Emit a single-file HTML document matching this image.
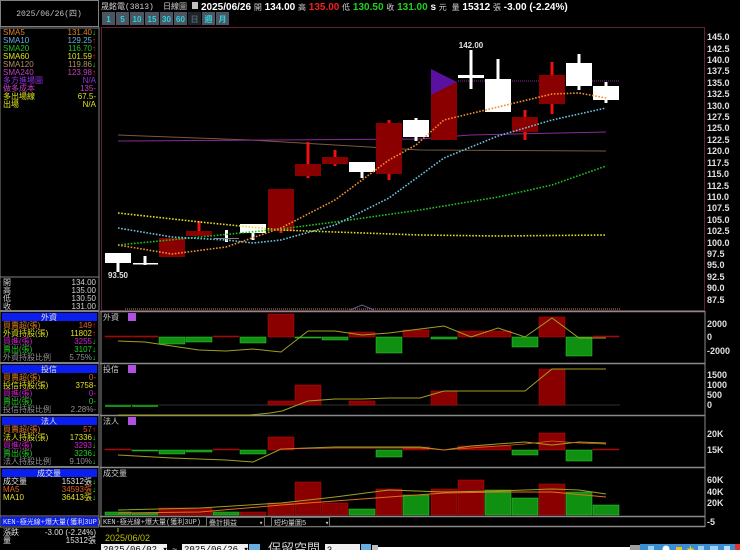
<!DOCTYPE html>
<html><head><meta charset="utf-8"><style>
html,body{margin:0;padding:0;background:#000;width:740px;height:550px;overflow:hidden}
svg{display:block}
text{font-family:"Liberation Sans","Noto Sans CJK TC",sans-serif}
.s{font-size:8px}
.m{font-family:"Liberation Mono","Noto Sans CJK TC",monospace;font-size:8px}
.ax{font-family:"Liberation Sans",sans-serif;font-size:9px;font-weight:bold;fill:#e0e0e0}
</style></head><body>
<svg width="740" height="550" viewBox="0 0 740 550" xmlns="http://www.w3.org/2000/svg">
<rect width="740" height="550" fill="#000"/>
<!-- left panel -->
<rect x="0.5" y="0.5" width="98" height="26" fill="#000" stroke="#808080"/>
<text x="49" y="16" class="m" fill="#c0c0c0" text-anchor="middle">2025/06/26(四)</text>
<line x1="99" y1="27" x2="99" y2="527" stroke="#808080"/>
<line x1="0" y1="27" x2="0" y2="527" stroke="#808080"/>
<line x1="0" y1="28" x2="99" y2="28" stroke="#808080"/>
<g class="m">
<text x="3" y="35" fill="#e08020">SMA5</text><text x="96" y="35" fill="#e08020" text-anchor="end">131.40<tspan fill="#20e020">↓</tspan></text>
<text x="3" y="43" fill="#60b0e0">SMA10</text><text x="96" y="43" fill="#60b0e0" text-anchor="end">129.25<tspan fill="#f02020">↑</tspan></text>
<text x="3" y="51" fill="#20c020">SMA20</text><text x="96" y="51" fill="#20c020" text-anchor="end">116.70<tspan fill="#f02020">↑</tspan></text>
<text x="3" y="59" fill="#e0e020">SMA60</text><text x="96" y="59" fill="#e0e020" text-anchor="end">101.59<tspan fill="#f02020">↑</tspan></text>
<text x="3" y="67" fill="#b09060">SMA120</text><text x="96" y="67" fill="#b09060" text-anchor="end">119.86<tspan fill="#20e020">↓</tspan></text>
<text x="3" y="75" fill="#c040c0">SMA240</text><text x="96" y="75" fill="#c040c0" text-anchor="end">123.98<tspan fill="#f02020">↑</tspan></text>
<text x="3" y="83" fill="#9030e0">多方進場圖</text><text x="96" y="83" fill="#9030e0" text-anchor="end">N/A</text>
<text x="3" y="91" fill="#c040c0">做多成本</text><text x="96" y="91" fill="#c040c0" text-anchor="end">135-</text>
<text x="3" y="99" fill="#e0e020">多出場線</text><text x="96" y="99" fill="#e0e020" text-anchor="end">67.5-</text>
<text x="3" y="107" fill="#e0e020">出場</text><text x="96" y="107" fill="#e0e020" text-anchor="end">N/A</text>
</g>
<line x1="0" y1="277" x2="99" y2="277" stroke="#808080"/>
<g class="m" fill="#d0d0d0">
<text x="3" y="285">開</text><text x="96" y="285" text-anchor="end">134.00</text>
<text x="3" y="293">高</text><text x="96" y="293" text-anchor="end">135.00</text>
<text x="3" y="301">低</text><text x="96" y="301" text-anchor="end">130.50</text>
<text x="3" y="309">收</text><text x="96" y="309" text-anchor="end">131.00</text>
</g>
<!-- 外資 -->
<line x1="0" y1="311" x2="99" y2="311" stroke="#808080" stroke-width="2"/>
<rect x="2" y="313" width="95" height="8" fill="#0a1ef0"/>
<text x="49" y="320" class="m" fill="#e0e0e0" text-anchor="middle">外資</text>
<g class="m">
<text x="3" y="328" fill="#e08020">買賣超(張)</text><text x="96" y="328" fill="#e06020" text-anchor="end">149<tspan fill="#f02020">↑</tspan></text>
<text x="3" y="336" fill="#e0e020">外資持股(張)</text><text x="96" y="336" fill="#e0e020" text-anchor="end">11802<tspan fill="#f02020">↑</tspan></text>
<text x="3" y="344" fill="#d020d0">買進(張)</text><text x="96" y="344" fill="#d020d0" text-anchor="end">3255<tspan fill="#20e020">↓</tspan></text>
<text x="3" y="352" fill="#20d020">賣出(張)</text><text x="96" y="352" fill="#20d020" text-anchor="end">3107<tspan fill="#20e020">↓</tspan></text>
<text x="3" y="360" fill="#909090">外資持股比例</text><text x="96" y="360" fill="#909090" text-anchor="end">5.75%<tspan fill="#20e020">↓</tspan></text>
</g>
<!-- 投信 -->
<line x1="0" y1="363" x2="99" y2="363" stroke="#808080" stroke-width="2"/>
<rect x="2" y="365" width="95" height="8" fill="#0a1ef0"/>
<text x="49" y="372" class="m" fill="#e0e0e0" text-anchor="middle">投信</text>
<g class="m">
<text x="3" y="380" fill="#e08020">買賣超(張)</text><text x="96" y="380" fill="#e06020" text-anchor="end">0-</text>
<text x="3" y="388" fill="#e0e020">投信持股(張)</text><text x="96" y="388" fill="#e0e020" text-anchor="end">3758-</text>
<text x="3" y="396" fill="#d020d0">買進(張)</text><text x="96" y="396" fill="#d020d0" text-anchor="end">0-</text>
<text x="3" y="404" fill="#20d020">賣出(張)</text><text x="96" y="404" fill="#20d020" text-anchor="end">0-</text>
<text x="3" y="412" fill="#909090">投信持股比例</text><text x="96" y="412" fill="#909090" text-anchor="end">2.28%-</text>
</g>
<!-- 法人 -->
<line x1="0" y1="415" x2="99" y2="415" stroke="#808080" stroke-width="2"/>
<rect x="2" y="417" width="95" height="8" fill="#0a1ef0"/>
<text x="49" y="424" class="m" fill="#e0e0e0" text-anchor="middle">法人</text>
<g class="m">
<text x="3" y="432" fill="#e08020">買賣超(張)</text><text x="96" y="432" fill="#e06020" text-anchor="end">57<tspan fill="#f02020">↑</tspan></text>
<text x="3" y="440" fill="#e0e020">法人持股(張)</text><text x="96" y="440" fill="#e0e020" text-anchor="end">17336<tspan fill="#20e020">↓</tspan></text>
<text x="3" y="448" fill="#d020d0">買進(張)</text><text x="96" y="448" fill="#d020d0" text-anchor="end">3293<tspan fill="#20e020">↓</tspan></text>
<text x="3" y="456" fill="#20d020">賣出(張)</text><text x="96" y="456" fill="#20d020" text-anchor="end">3236<tspan fill="#20e020">↓</tspan></text>
<text x="3" y="464" fill="#909090">法人持股比例</text><text x="96" y="464" fill="#909090" text-anchor="end">9.10%<tspan fill="#20e020">↓</tspan></text>
</g>
<!-- 成交量 -->
<line x1="0" y1="467" x2="99" y2="467" stroke="#808080" stroke-width="2"/>
<rect x="2" y="469" width="95" height="8" fill="#0a1ef0"/>
<text x="49" y="476" class="m" fill="#e0e0e0" text-anchor="middle">成交量</text>
<g class="m">
<text x="3" y="484" fill="#e0e0e0">成交量</text><text x="96" y="484" fill="#e0e0e0" text-anchor="end">15312張<tspan fill="#20e020">↓</tspan></text>
<text x="3" y="492" fill="#e06020">MA5</text><text x="96" y="492" fill="#e06020" text-anchor="end">34593張<tspan fill="#20e020">↓</tspan></text>
<text x="3" y="500" fill="#e0e020">MA10</text><text x="96" y="500" fill="#e0e020" text-anchor="end">36413張<tspan fill="#20e020">↓</tspan></text>
</g>
<line x1="0" y1="516" x2="99" y2="516" stroke="#808080"/>
<rect x="1" y="517" width="97" height="9" fill="#0a1ef0"/>
<text x="3" y="524" class="m" fill="#e0e0e0" style="font-size:7px">KEN-極光線+爆大量(獲利3UP)</text>
<line x1="0" y1="527" x2="99" y2="527" stroke="#808080"/>
<g class="m" fill="#e0e0e0">
<text x="3" y="535">漲跌</text><text x="96" y="535" text-anchor="end">-3.00 (-2.24%)</text>
<text x="3" y="543">量</text><text x="96" y="543" text-anchor="end">15312張</text>
</g>

<!-- header -->
<text x="101" y="9" class="m" fill="#d0d0d0">晟銘電(3813)</text>
<text x="163" y="9" class="m" fill="#d0d0d0">日線圖</text>
<rect x="192" y="2" width="6" height="7" fill="#c0c0c0"/>
<text x="201" y="10" style="font-size:10px;font-weight:bold" fill="#fff">2025/06/26 <tspan class="m" fill="#d0d0d0" style="font-weight:normal;font-size:8px">開</tspan> 134.00 <tspan class="m" fill="#d0d0d0" style="font-weight:normal;font-size:8px">高</tspan> <tspan fill="#f02020">135.00</tspan> <tspan class="m" fill="#d0d0d0" style="font-weight:normal;font-size:8px">低</tspan> <tspan fill="#20d020">130.50</tspan> <tspan class="m" fill="#d0d0d0" style="font-weight:normal;font-size:8px">收</tspan> <tspan fill="#20d020">131.00</tspan> s <tspan class="m" fill="#d0d0d0" style="font-weight:normal;font-size:8px">元 量</tspan> 15312 <tspan class="m" fill="#d0d0d0" style="font-weight:normal;font-size:8px">張</tspan> -3.00 (-2.24%)</text>
<g style="font-size:8px;font-weight:bold" fill="#30d0e0">
<rect x="102" y="12" width="13" height="13" fill="#4a5560"/><text x="108.5" y="22" text-anchor="middle">1</text>
<rect x="116" y="12" width="13" height="13" fill="#4a5560"/><text x="122.5" y="22" text-anchor="middle">5</text>
<rect x="130" y="12" width="14" height="13" fill="#4a5560"/><text x="137" y="22" text-anchor="middle">10</text>
<rect x="145" y="12" width="14" height="13" fill="#4a5560"/><text x="152" y="22" text-anchor="middle">15</text>
<rect x="160" y="12" width="13" height="13" fill="#4a5560"/><text x="166.5" y="22" text-anchor="middle">30</text>
<rect x="174" y="12" width="13" height="13" fill="#4a5560"/><text x="180.5" y="22" text-anchor="middle">60</text>
<rect x="188" y="12" width="13" height="13" fill="#202428"/><text x="194.5" y="22" text-anchor="middle" fill="#506070" class="m">日</text>
<rect x="202" y="12" width="13" height="13" fill="#4a5560"/><text x="208.5" y="22" text-anchor="middle" class="m">週</text>
<rect x="216" y="12" width="13" height="13" fill="#4a5560"/><text x="222.5" y="22" text-anchor="middle" class="m">月</text>
</g>

<!-- main chart border -->
<rect x="101.5" y="27.5" width="603" height="283" fill="none" stroke="#602035"/>
<g class="ax">
<text x="707" y="40">145.0</text><text x="707" y="52">142.5</text><text x="707" y="63">140.0</text><text x="707" y="74">137.5</text><text x="707" y="86">135.0</text><text x="707" y="97">132.5</text><text x="707" y="109">130.0</text><text x="707" y="120">127.5</text><text x="707" y="131">125.0</text><text x="707" y="143">122.5</text><text x="707" y="154">120.0</text><text x="707" y="166">117.5</text><text x="707" y="177">115.0</text><text x="707" y="189">112.5</text><text x="707" y="200">110.0</text><text x="707" y="211">107.5</text><text x="707" y="223">105.0</text><text x="707" y="234">102.5</text><text x="707" y="246">100.0</text><text x="707" y="257">97.5</text><text x="707" y="268">95.0</text><text x="707" y="280">92.5</text><text x="707" y="291">90.0</text><text x="707" y="303">87.5</text>
</g>
<!-- slow MA lines -->
<polyline points="118,135 250,140 335,145 420,150 606,151" fill="none" stroke="#7a5a3a" stroke-width="1"/>
<polyline points="118,141 420,139 470,135 606,132" fill="none" stroke="#8a2a9a" stroke-width="1"/>
<line x1="458" y1="81" x2="620" y2="81" stroke="#8a2a9a" stroke-dasharray="1,1"/>
<!-- candles -->
<g>
<!-- white (down) candles -->
<g fill="#fff">
<rect x="116.5" y="253" width="3" height="19"/><rect x="105" y="253" width="26" height="10"/>
<rect x="143.5" y="256" width="3" height="9"/><rect x="133" y="263" width="25" height="1.5"/>
<rect x="225" y="230" width="3" height="12"/>
<rect x="251.5" y="224" width="3" height="16"/><rect x="240" y="224" width="26" height="9"/>
<rect x="360.5" y="162" width="3" height="16"/><rect x="349" y="162" width="26" height="10"/>
<rect x="414.5" y="118" width="3" height="23"/><rect x="403" y="120" width="26" height="17"/>
<rect x="469.5" y="50" width="3" height="39"/><rect x="458" y="75" width="26" height="3"/>
<rect x="496.5" y="59" width="3" height="53"/><rect x="485" y="79" width="26" height="33"/>
<rect x="577.5" y="54" width="3" height="36"/><rect x="566" y="63" width="26" height="23"/>
<rect x="604.5" y="82" width="3" height="21"/><rect x="593" y="86" width="26" height="14"/>
</g>
<rect x="214" y="238" width="25" height="1" fill="#808080"/>
<!-- red candles -->
<g fill="#f01010">
<rect x="197.5" y="221" width="3" height="15"/>
<rect x="279.5" y="189" width="3" height="44"/>
<rect x="306.5" y="142" width="3" height="36"/>
<rect x="333.5" y="150" width="3" height="16"/>
<rect x="387.5" y="120" width="3" height="60"/>
<rect x="523.5" y="110" width="3" height="30"/>
<rect x="550.5" y="62" width="3" height="52"/>
</g>
<g fill="#8a0000">
<rect x="159" y="238" width="26" height="19"/>
<rect x="186" y="231" width="26" height="5"/>
<rect x="268" y="189" width="26" height="42"/>
<rect x="295" y="164" width="26" height="12"/>
<rect x="322" y="157" width="26" height="7"/>
<rect x="376" y="123" width="26" height="51"/>
<rect x="431" y="82" width="26" height="58"/>
<rect x="512" y="117" width="26" height="15"/>
<rect x="539" y="75" width="26" height="29"/>
</g>
<polygon points="431,69 457,82 431,95" fill="#5a10a0"/>
</g>
<!-- dotted MAs -->
<g fill="none" stroke-width="1.6" stroke-dasharray="1.6,1.6">
<polyline stroke="#e0e020" points="118,213 200,222 281,230 335,232 420,235 498,236 606,235"/>
<polyline stroke="#20c020" points="118,245 200,237 281,229 335,222 420,210 498,197 552,185 606,166"/>
<polyline stroke="#70c0e0" points="118,228 172,237 226,240 253,243 281,240 335,225 389,198 444,158 498,136 552,120 606,108"/>
<polyline stroke="#f09030" points="118,245 172,254 226,247 281,228 335,200 389,160 416,145 444,120 498,107 552,94 579,93 606,98"/>
</g>
<text x="118" y="278" text-anchor="middle" style="font-size:8px;font-weight:bold" fill="#e0e0e0">93.50</text>
<text x="471" y="48" text-anchor="middle" style="font-size:8px;font-weight:bold" fill="#e0e0e0">142.00</text>
<line x1="125" y1="309" x2="620" y2="309" stroke="#806040" stroke-width="1.5" stroke-dasharray="1,1"/>
<polyline points="350,310 362,305 374,310" fill="none" stroke="#606090"/>

<!-- sub-panel separators -->
<g stroke="#8a8a8a" stroke-width="1.5">
<line x1="100" y1="311.5" x2="705" y2="311.5"/>
<line x1="100" y1="363.5" x2="705" y2="363.5"/>
<line x1="100" y1="415.5" x2="705" y2="415.5"/>
<line x1="100" y1="467.5" x2="705" y2="467.5"/>
<line x1="100" y1="516.5" x2="705" y2="516.5"/>
<line x1="100" y1="526.5" x2="705" y2="526.5"/>
</g>
<line x1="705" y1="311" x2="705" y2="527" stroke="#8a8a8a"/>
<line x1="101" y1="311" x2="101" y2="527" stroke="#8a8a8a"/>
<!-- panel titles -->
<g class="m" fill="#d0d0d0">
<text x="103" y="320">外資</text><text x="103" y="372">投信</text><text x="103" y="424">法人</text><text x="103" y="476">成交量</text>
</g>
<g fill="#b050e0"><rect x="128" y="313" width="8" height="8"/><rect x="128" y="365" width="8" height="8"/><rect x="128" y="417" width="8" height="8"/></g>

<!-- 外資 -->
<g class="ax"><text x="707" y="327">2000</text><text x="707" y="340">0</text><text x="707" y="354">-2000</text></g>
<g fill="#8a0000" stroke="#c01010" stroke-width="0.5">
<rect x="105" y="336" width="26" height="1"/><rect x="132" y="336" width="26" height="1"/><rect x="213" y="336" width="26" height="1"/>
<rect x="268" y="314" width="26" height="23"/><rect x="349" y="332" width="26" height="5"/><rect x="403" y="330" width="26" height="7"/>
<rect x="458" y="331" width="26" height="6"/><rect x="485" y="331" width="26" height="6"/><rect x="539" y="317" width="26" height="20"/><rect x="593" y="336" width="26" height="1"/>
</g>
<g fill="#109010" stroke="#30d030" stroke-width="0.5">
<rect x="159" y="337" width="26" height="7"/><rect x="186" y="337" width="26" height="5"/><rect x="240" y="337" width="26" height="6"/>
<rect x="295" y="337" width="26" height="1"/><rect x="322" y="337" width="26" height="3"/><rect x="376" y="337" width="26" height="16"/>
<rect x="431" y="337" width="26" height="2"/><rect x="512" y="337" width="26" height="10"/><rect x="566" y="337" width="26" height="19"/>
</g>
<polyline points="118,341 145,342 172,346 199,350 226,351 253,349 281,352 308,331 335,331 362,335 389,333 420,329 444,326 471,337 498,328 525,337 552,318 579,338 606,338" fill="none" stroke="#a0a020" stroke-width="1"/>

<!-- 投信 -->
<g class="ax"><text x="707" y="378">1500</text><text x="707" y="388">1000</text><text x="707" y="398">500</text><text x="707" y="408">0</text></g>
<line x1="105" y1="405" x2="620" y2="405" stroke="#303030"/>
<g fill="#109010"><rect x="105" y="405" width="26" height="2"/><rect x="132" y="405" width="26" height="2"/></g>
<g fill="#8a0000" stroke="#c01010" stroke-width="0.5">
<rect x="268" y="401" width="26" height="4"/><rect x="295" y="385" width="26" height="20"/><rect x="349" y="401" width="26" height="4"/>
<rect x="431" y="391" width="26" height="14"/><rect x="539" y="369" width="26" height="36"/>
</g>
<polyline points="118,415 250,415 270,413 282,411 308,401 335,399 362,399 389,398 420,398 444,391 525,391 552,369 606,369" fill="none" stroke="#a0a020" stroke-width="1"/>

<!-- 法人 -->
<g class="ax"><text x="707" y="437">20K</text><text x="707" y="453">15K</text></g>
<g fill="#8a0000" stroke="#c01010" stroke-width="0.5">
<rect x="105" y="449" width="26" height="1"/><rect x="213" y="449" width="26" height="1"/><rect x="268" y="437" width="26" height="13"/>
<rect x="403" y="447" width="26" height="3"/><rect x="458" y="446" width="26" height="4"/><rect x="485" y="446" width="26" height="4"/>
<rect x="539" y="433" width="26" height="17"/><rect x="593" y="449" width="26" height="1"/>
</g>
<g fill="#109010" stroke="#30d030" stroke-width="0.5">
<rect x="132" y="450" width="26" height="1"/><rect x="159" y="450" width="26" height="4"/><rect x="186" y="450" width="26" height="2"/>
<rect x="240" y="450" width="26" height="4"/><rect x="376" y="450" width="26" height="7"/><rect x="512" y="450" width="26" height="5"/><rect x="566" y="450" width="26" height="11"/>
</g>
<polyline points="118,455 172,458 226,460 253,462 281,449 335,447 420,447 444,450 471,446 525,442 552,445 579,442 606,443" fill="none" stroke="#a0a020" stroke-width="1"/>
<polyline points="281,449 335,448 420,448 444,450 525,444 552,441 579,443 606,444" fill="none" stroke="#e06020" stroke-width="0.8"/>

<!-- 成交量 -->
<g class="ax"><text x="707" y="483">60K</text><text x="707" y="495">40K</text><text x="707" y="506">20K</text><text x="707" y="525">-5</text></g>
<g fill="#8a0000" stroke="#c01010" stroke-width="0.5">
<rect x="159" y="508" width="26" height="7"/><rect x="186" y="508" width="26" height="7"/><rect x="240" y="512" width="26" height="3"/>
<rect x="268" y="503" width="26" height="12"/><rect x="295" y="482" width="26" height="33"/><rect x="322" y="503" width="26" height="12"/>
<rect x="376" y="489" width="26" height="26"/><rect x="431" y="489" width="26" height="26"/><rect x="458" y="480" width="26" height="35"/><rect x="539" y="484" width="26" height="31"/>
</g>
<g fill="#109010" stroke="#30d030" stroke-width="0.5">
<rect x="105" y="512" width="26" height="3"/><rect x="132" y="513" width="26" height="2"/><rect x="213" y="512" width="26" height="3"/>
<rect x="349" y="509" width="26" height="6"/><rect x="403" y="495" width="26" height="20"/><rect x="485" y="490" width="26" height="25"/>
<rect x="512" y="498" width="26" height="17"/><rect x="566" y="492" width="26" height="23"/><rect x="593" y="505" width="26" height="10"/>
</g>
<polyline points="118,510 200,508 281,503 335,497 389,490 444,492 498,491 552,489 579,490 606,494" fill="none" stroke="#a0a020" stroke-width="1"/>
<polyline points="118,513 200,512 281,505 335,501 389,497 444,493 498,492 552,492 606,497" fill="none" stroke="#e07020" stroke-width="1"/>

<!-- bottom tool row -->
<text x="103" y="524" class="m" fill="#d0d0d0" style="font-size:7px">KEN-極光線+爆大量(獲利3UP)</text>
<rect x="206.5" y="517.5" width="58" height="9" fill="#000" stroke="#707070"/>
<text x="209" y="525" class="m" fill="#d0d0d0" style="font-size:7px">疊計損益</text>
<text x="259" y="525" class="m" fill="#d0d0d0" style="font-size:7px">▾</text>
<rect x="271.5" y="517.5" width="58" height="9" fill="#000" stroke="#707070"/>
<text x="274" y="525" class="m" fill="#d0d0d0" style="font-size:7px">短均量圖5</text>
<text x="325" y="525" class="m" fill="#d0d0d0" style="font-size:7px">▾</text>
<line x1="118" y1="528" x2="118" y2="532" stroke="#c0c000"/>
<text x="105" y="541" style="font-size:9px" fill="#c0c000">2025/06/02</text>
<!-- bottom controls -->
<rect x="101" y="544" width="66" height="10" fill="#f0f0f0"/>
<text x="103" y="552" class="m" fill="#000" style="font-size:9px">2025/06/02 ▾</text>
<text x="172" y="552" fill="#d0d0d0" style="font-size:9px">~</text>
<rect x="182" y="544" width="66" height="10" fill="#f0f0f0"/>
<text x="184" y="552" class="m" fill="#000" style="font-size:9px">2025/06/26 ▾</text>
<rect x="249" y="544" width="11" height="10" fill="#6aaee0"/>
<text x="268" y="553" style="font-size:13px" fill="#d0d0d0">保留空間</text>
<rect x="325" y="544" width="35" height="10" fill="#f0f0f0"/>
<text x="327" y="553" style="font-size:9px" fill="#000">3</text>
<rect x="361" y="544" width="10" height="10" fill="#6aaee0"/>
<rect x="372" y="545" width="6" height="9" fill="#c0c0c0"/>
<rect x="378" y="547" width="252" height="5" fill="#fff"/>
<rect x="630" y="545" width="10" height="9" fill="#a0a0a0"/>
<g>
<rect x="640" y="544" width="100" height="10" fill="#3a8ed0"/>
<rect x="648" y="546" width="6" height="6" fill="#a0d0f0"/>
<circle cx="666" cy="549" r="3.5" fill="#fff"/>
<rect x="676" y="547" width="6" height="4" fill="#f0c020"/>
<text x="686" y="553" style="font-size:9px" fill="#f0d020">★</text>
<rect x="698" y="546" width="6" height="6" fill="#a0d0f0"/>
<rect x="710" y="546" width="8" height="6" fill="#a0d0f0"/>
<rect x="724" y="546" width="6" height="6" fill="#c0e0f0"/>
<rect x="735" y="544" width="5" height="10" fill="#e03030"/>
</g>
</svg>
</body></html>
